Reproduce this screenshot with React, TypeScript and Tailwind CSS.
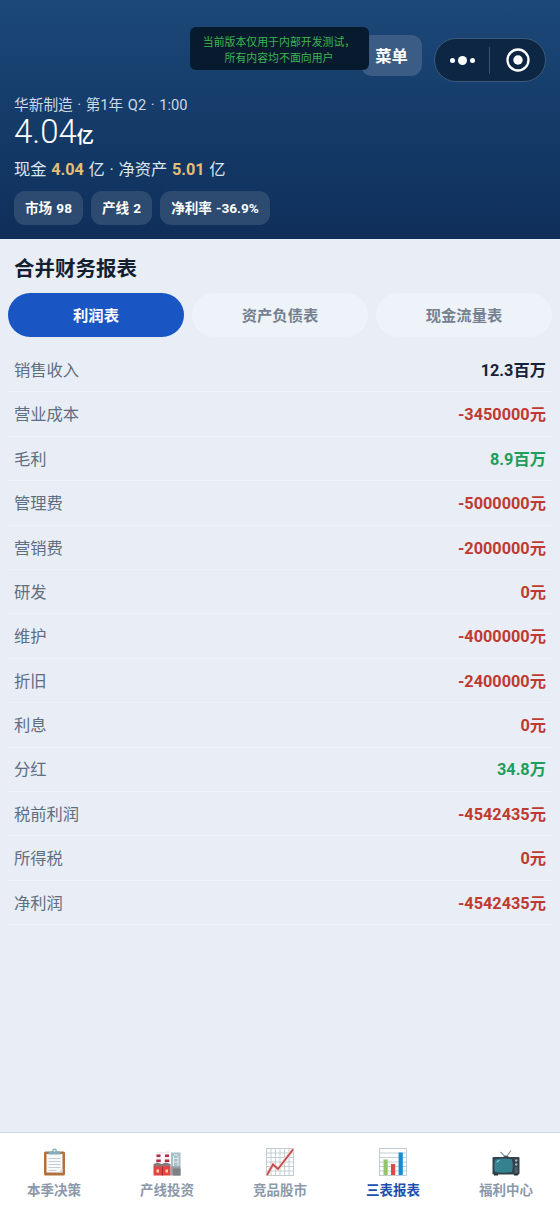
import { useState } from "react";
import type { ReactNode } from "react";

type Tone = "neutral" | "positive" | "negative";

interface ReportRow {
  label: string;
  value: string;
  tone: Tone;
}

const rows: ReportRow[] = [
  { label: "销售收入", value: "12.3百万", tone: "neutral" },
  { label: "营业成本", value: "-3450000元", tone: "negative" },
  { label: "毛利", value: "8.9百万", tone: "positive" },
  { label: "管理费", value: "-5000000元", tone: "negative" },
  { label: "营销费", value: "-2000000元", tone: "negative" },
  { label: "研发", value: "0元", tone: "negative" },
  { label: "维护", value: "-4000000元", tone: "negative" },
  { label: "折旧", value: "-2400000元", tone: "negative" },
  { label: "利息", value: "0元", tone: "negative" },
  { label: "分红", value: "34.8万", tone: "positive" },
  { label: "税前利润", value: "-4542435元", tone: "negative" },
  { label: "所得税", value: "0元", tone: "negative" },
  { label: "净利润", value: "-4542435元", tone: "negative" },
];

const toneClass: Record<Tone, string> = {
  neutral: "text-[#172238]",
  positive: "text-[#1f9d5a]",
  negative: "text-[#bf3a30]",
};

const tabs = ["利润表", "资产负债表", "现金流量表"];
const chips = ["市场 98", "产线 2", "净利率 -36.9%"];

function ClipboardIcon() {
  return (
    <svg width="27" height="28" viewBox="0 0 27 28">
      <rect x="3" y="3.5" width="21" height="24" rx="1.5" fill="#b0703f" />
      <path d="M5.500 6h16v18.500h-16z" fill="#f8fafb" />
      <path d="M17.500 24.500l4-4v4z" fill="#cfd8dc" />
      <path d="M7.500 10.500h12M7.500 13.500h12M7.500 16.500h12M7.500 19.500h12M7.500 22.500h8" stroke="#b4c3ca" strokeWidth="0.8" />
      <path d="M7.500 6.500v-2q0-1 1.500-1h2q0-3 2.500-3t2.500 3h2q1.500 0 1.500 1v2z" fill="#82aebb" />
      <circle cx="13.500" cy="2.700" r="1" fill="#eef5f7" />
    </svg>
  );
}

function FactoryIcon() {
  return (
    <svg width="28" height="28" viewBox="0 0 28 28">
      <path d="M3 5.500q2-2.500 5-1.500t8-1.500v3z" fill="#e7ecef" />
      <path d="M18 4.500h9.500v15H18z" fill="#a9bec6" />
      <path d="M20.500 8v10M25 8v10M21 7h4M21 10.500h4M21 14h4" stroke="#e1eff2" strokeWidth="1" />
      <path d="M3.500 5h4l.5 11H3zM12 5h4l.5 11h-5z" fill="#f3eeee" />
      <path d="M3.500 6.500h4v2.500h-4zM3.300 11.500h4.500V14H3.300zM12 6.500h4v2.500h-4zM11.800 11.500h4.500V14h-4.500z" fill="#b52d44" />
      <path d="M.5 16l4-1.500 4 1.500 4-1.500 5 1.500v3H.5z" fill="#8d7779" />
      <path d="M.5 18.500h17v9H.5z" fill="#e34442" />
      <path d="M9 18.500h1v9H9z" fill="#a52e33" />
      <path d="M3.500 21.500h2.500v3H3.500zM12.500 21.500H15v3h-2.500z" fill="#ffd3ad" />
      <path d="M17.500 18.500h10v9h-10z" fill="#9a9da0" />
      <path d="M20 20.500h7.500v7H20z" fill="#7b8084" />
    </svg>
  );
}

function ChartGrid() {
  return (
    <>
      <rect x="0.500" y="0.500" width="27" height="27" fill="#fdfefe" stroke="#c3ccd0" />
      <path d="M0 5h28M0 9.500h28M0 14h28M0 18.500h28M0 23h28" stroke="#bfcbd0" strokeWidth="0.900" />
    </>
  );
}

function StockIcon() {
  return (
    <svg width="28" height="28" viewBox="0 0 28 28">
      <ChartGrid />
      <path d="M5 0v28M9.500 0v28M14 0v28M18.500 0v28M23 0v28" stroke="#bfcbd0" strokeWidth="0.900" />
      <path d="M1 27l6-10.500 5 4.500L27 1.500" fill="none" stroke="#f7d9d9" strokeWidth="3.500" />
      <path d="M1 27l6-10.500 5 4.500L27 1.500" fill="none" stroke="#c24a4c" strokeWidth="1.800" />
    </svg>
  );
}

function ReportIcon() {
  return (
    <svg width="28" height="28" viewBox="0 0 28 28">
      <ChartGrid />
      <path d="M4.500 11.500h4.200V27H4.500z" fill="#94c56a" />
      <path d="M12 16h4.200v11H12z" fill="#dc4a40" />
      <path d="M19.600 4.500h4.200V27h-4.200z" fill="#168bd0" />
    </svg>
  );
}

function TvIcon() {
  return (
    <svg width="28" height="28" viewBox="0 0 28 28">
      <path d="M8.500 4l5.500 5.500L19 2.500" fill="none" stroke="#84959d" strokeWidth="1.100" />
      <path d="M10.500 9.500q3.500-4 7 0z" fill="#46565e" />
      <rect x="0.500" y="9" width="27" height="17.500" rx="1" fill="#32424a" />
      <path d="M2 26h4v1.500H2zM22 26h4v1.500h-4z" fill="#273238" />
      <path d="M3 11.500q8-2 17 0 1.500 6 0 12.500-9 1.500-17 0-1.500-6 0-12.500z" fill="#34818f" />
      <path d="M4.500 15q0-3 4-3-2 1-4 3z" fill="#a9dfe6" />
      <circle cx="24.200" cy="12.500" r="1.200" fill="#a9b8be" />
      <circle cx="24.200" cy="16.500" r="1.200" fill="#a9b8be" />
      <path d="M22.700 20h3M22.700 22h3M22.700 24h3" stroke="#839198" strokeWidth="0.800" />
    </svg>
  );
}

const navItems: { label: string; icon: ReactNode }[] = [
  { label: "本季决策", icon: <ClipboardIcon /> },
  { label: "产线投资", icon: <FactoryIcon /> },
  { label: "竞品股市", icon: <StockIcon /> },
  { label: "三表报表", icon: <ReportIcon /> },
  { label: "福利中心", icon: <TvIcon /> },
];

function Header() {
  return (
    <header className="relative h-[239px] bg-linear-to-b from-[#1b4878] to-[#0f2f5a] px-3.5 pt-[35px] text-white">
      <div className="flex h-[60px] items-start justify-end gap-3">
        <button className="h-[41px] w-[61px] rounded-[11px] bg-[#3b5c85] pt-[3px] text-[16.3px] font-bold">
          菜单
        </button>
        <div className="mt-[3px] flex h-11 w-28 items-center rounded-full border-[1.5px] border-[#3c597a] bg-[#0d2644]">
          <div className="flex flex-1 items-center justify-center gap-[3px]">
            <span className="size-[5px] rounded-full bg-white" />
            <span className="size-[9px] rounded-full bg-white" />
            <span className="size-[5px] rounded-full bg-white" />
          </div>
          <div className="h-[27px] w-px bg-[#3b516c]" />
          <div className="flex flex-1 items-center justify-center pl-px">
            <svg width="24" height="24" viewBox="0 0 24 24">
              <circle cx="12" cy="12" r="10.500" fill="none" stroke="white" strokeWidth="2.300" />
              <circle cx="12" cy="12" r="4.700" fill="white" />
            </svg>
          </div>
        </div>
      </div>

      {/* Internal test notice, floats over the menu button */}
      <div className="absolute left-[190px] top-[27px] h-[43px] w-[179px] rounded-md bg-[#071a2e] pr-px pt-2 text-center text-[10.9px] leading-[15.5px] text-[#3bb750]">
        <p className="whitespace-nowrap">当前版本仅用于内部开发测试，</p>
        <p>所有内容均不面向用户</p>
      </div>

      <p className="text-[14.7px] leading-5 text-[#ccd9e8] [word-spacing:0.9px]">
        华新制造 · 第1年 Q2 · 1:00
      </p>
      <p className="flex h-[36px] items-baseline text-[33px] font-light leading-[34px]">
        4.04<span className="text-[17px] font-bold">亿</span>
      </p>
      <p className="mt-[9px] text-[16.3px] leading-5 text-[#dce6f1] [word-spacing:0.6px]">
        现金 <b className="font-bold text-[#e6bd74]">4.04</b> 亿 · 净资产{" "}
        <b className="font-bold text-[#e6bd74]">5.01</b> 亿
      </p>
      <div className="mt-[11px] flex gap-2">
        {chips.map((chip) => (
          <span
            key={chip}
            className="flex h-[34px] items-center rounded-[11px] bg-[#2d4a70] px-[11px] pt-px text-[13.6px] font-bold [word-spacing:0.8px]"
          >
            {chip}
          </span>
        ))}
      </div>
    </header>
  );
}

export default function App() {
  const [activeTab, setActiveTab] = useState(0);
  const [activeNav, setActiveNav] = useState(3);

  return (
    <div className="flex h-[1211px] w-[560px] flex-col overflow-hidden bg-[#e8edf6] font-[Roboto,'Noto_Sans_CJK_SC',sans-serif]">
      <Header />

      <main className="flex-1 px-2">
        <h1 className="px-1.5 pt-[15px] text-[20.5px] font-bold leading-[30px] text-[#131e31]">
          合并财务报表
        </h1>
        <div className="mt-[9px] grid grid-cols-3 gap-2">
          {tabs.map((tab, i) => (
            <button
              key={tab}
              onClick={() => setActiveTab(i)}
              className={`h-11 rounded-full pt-0.5 text-[15.3px] font-bold ${
                i === activeTab ? "bg-[#1a55c4] text-white" : "bg-[#eef3fa] text-[#75818f]"
              }`}
            >
              {tab}
            </button>
          ))}
        </div>

        <div className="mt-[11px]">
          {rows.map((row) => (
            <div
              key={row.label}
              className="flex h-[44.4px] items-center justify-between border-b border-[#f0f4fa] px-1.5 pt-[3px] text-[16.3px]"
            >
              <span className="text-[#5f6e80]">{row.label}</span>
              <span className={`font-bold ${toneClass[row.tone]}`}>{row.value}</span>
            </div>
          ))}
        </div>
      </main>

      <nav className="grid h-[79px] grid-cols-5 gap-[5px] border-t border-[#cfd7e4] bg-white">
        {navItems.map((item, i) => (
          <button
            key={item.label}
            onClick={() => setActiveNav(i)}
            className={`flex flex-col items-center pt-[15px] text-[13.5px] font-bold leading-5 ${
              i === activeNav ? "text-[#1d50b0]" : "text-[#8b99aa]"
            }`}
          >
            {item.icon}
            <span className="mt-1">{item.label}</span>
          </button>
        ))}
      </nav>
    </div>
  );
}
